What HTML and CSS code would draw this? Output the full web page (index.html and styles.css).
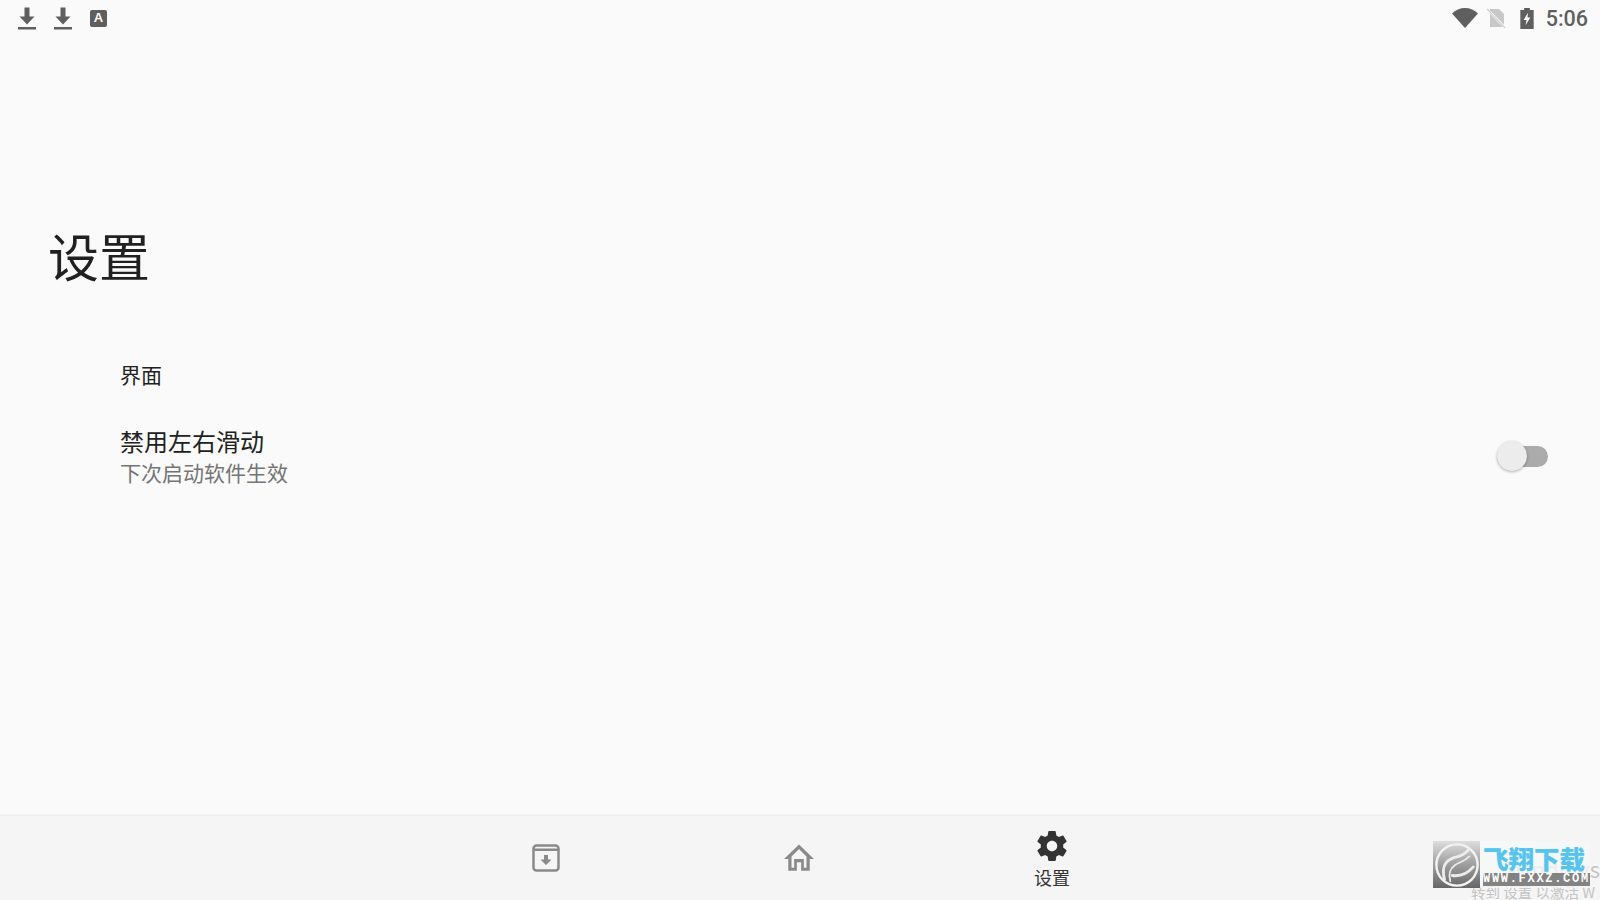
FILE: index.html
```html
<!DOCTYPE html>
<html lang="zh-CN">
<head>
<meta charset="utf-8">
<title>设置</title>
<link rel="stylesheet" href="styles.css">
</head>
<body>
<div class="app">
  <header class="status">
    <div class="status-left">
      <svg class="ic-dl" viewBox="0 0 18 24"><path d="M6.5 1.5h5v9h5L9 18.5 1.500 10.500h5z"/><rect y="21" width="18" height="2.500"/></svg>
      <svg class="ic-dl" viewBox="0 0 18 24"><path d="M6.5 1.5h5v9h5L9 18.5 1.500 10.500h5z"/><rect y="21" width="18" height="2.500"/></svg>
      <span class="ic-a">A</span>
    </div>
    <div class="status-right">
      <svg class="ic-wifi" viewBox="0 0 26 20"><path d="M0 5.500C3.500 2 8 0 13 0s9.500 2 13 5.500L13 20z"/></svg>
      <svg class="ic-sim" viewBox="0 0 20 20"><path d="M3 1h9l5 5v13H3z" fill="#c8c8c8"/><path d="M-1 0l20 20.500" stroke="#fafafa" stroke-width="2.500" fill="none"/><path d="M0 1l18 19" stroke="#cfcfcf" stroke-width="1.200" fill="none"/></svg>
      <svg class="ic-batt" viewBox="0 0 14 22"><path d="M4 0h6v2h4v20H0V2h4z" fill="#5f5f5f"/><path d="M8 5L3.500 12.500H6.500L5.500 18 10.500 10H7.500z" fill="#fafafa"/></svg>
      <span class="clock">5:06</span>
    </div>
  </header>

  <main class="page">
    <h1 class="title">设置</h1>
    <section class="group">
      <h2 class="group-title">界面</h2>
      <div class="row">
        <div class="row-text">
          <div class="row-title">禁用左右滑动</div>
          <div class="row-sub">下次启动软件生效</div>
        </div>
        <div class="switch"><span class="thumb"></span></div>
      </div>
    </section>
  </main>

  <nav class="nav">
    <div class="nav-item">
      <svg class="nav-ic" viewBox="0 0 28 28"><rect x="1.500" y="1.500" width="25" height="25" rx="3" fill="none" stroke="#8a8a8a" stroke-width="2.500"/><rect x="2" y="4.500" width="24" height="2.500" fill="#8a8a8a"/><path d="M12 11h4v4.500h3.500L14 21 8.500 15.500H12z" fill="#8a8a8a"/></svg>
    </div>
    <div class="nav-item">
      <svg class="nav-ic home" viewBox="0 0 28 28"><path d="M14 1.500L0 15h4v11h8v-8h4v8h8V15h4zM14 5.500l7 7V23h-2.500v-8h-9v8H7V12.500z" fill="#8a8a8a" fill-rule="evenodd"/></svg>
    </div>
    <div class="nav-item active">
      <svg class="gear" viewBox="0 0 24 24"><path fill-rule="evenodd" d="M19.430 12.980c.04-.32.070-.64.070-.98s-.03-.66-.07-.98l2.110-1.650c.19-.15.240-.42.120-.64l-2-3.460c-.12-.22-.39-.3-.61-.22l-2.490 1c-.52-.4-1.080-.73-1.690-.98l-.38-2.650C14.460 2.180 14.250 2 14 2h-4c-.25 0-.46.18-.49.42l-.38 2.650c-.61.25-1.170.59-1.690.98l-2.490-1c-.23-.09-.49 0-.61.220l-2 3.460c-.13.22-.07.49.12.640l2.110 1.650c-.04.32-.07.65-.07.98s.03.66.07.98l-2.110 1.650c-.19.15-.24.42-.12.64l2 3.460c.12.22.39.3.61.22l2.490-1c.52.4 1.080.73 1.690.98l.38 2.650c.03.24.24.42.49.42h4c.25 0 .46-.18.49-.42l.38-2.650c.61-.25 1.170-.59 1.690-.98l2.490 1c.23.09.49 0 .61-.22l2-3.460c.12-.22.07-.49-.12-.64l-2.110-1.650zM12 15.500c-1.930 0-3.500-1.570-3.500-3.500s1.570-3.500 3.500-3.500 3.500 1.570 3.500 3.500-1.570 3.500-3.500 3.500z"/></svg>
      <span class="nav-label">设置</span>
    </div>
  </nav>

  <div class="activate"><span class="act-1">Windows</span><span class="act-2">转到 设置 以激活 W</span></div>
  <div class="mark">
    <svg class="mark-logo" viewBox="0 0 48 48"><circle cx="24" cy="24" r="21.500" fill="none" stroke="#f2f2f2" stroke-width="2.500"/><g fill="none" stroke="#ececec" stroke-linecap="round"><path d="M11 39C8 28 11 20 19 17c6-2 12-2 17-9" stroke-width="3"/><path d="M17 41c-2-7-1-13 5-17 5-3 10-4 15-9" stroke-width="1.800"/><path d="M19 35c7 1 15-1 22-9" stroke-width="3"/></g></svg>
    <div class="mark-text">
      <span class="mark-cn">飞翔下载</span>
      <span class="mark-url">WWW.FXXZ.COM</span>
    </div>
  </div>
</div>
</body>
</html>
```
FILE: styles.css
```css
* { box-sizing: border-box; }
html, body { margin: 0; padding: 0; }
body {
  width: 1600px;
  height: 900px;
  overflow: hidden;
  background: #fafafa;
  font-family: "Noto Sans CJK SC", "Noto Sans", Roboto, sans-serif;
  color: #212121;
}
.app {
  position: relative;
  display: flex;
  flex-direction: column;
  width: 1600px;
  height: 900px;
}
.status {
  flex: none;
  height: 36px;
  display: flex;
  align-items: center;
  justify-content: space-between;
  padding: 0 12px 0 18px;
}
.status-left { display: flex; align-items: center; gap: 18px; }
.status-right { display: flex; align-items: center; }
.ic-dl { width: 18px; height: 24px; fill: #5f5f5f; display: block; }
.ic-a {
  width: 17px;
  height: 17px;
  background: #5f5f5f;
  color: #fafafa;
  border-radius: 2px;
  font: bold 13px/16px "Liberation Sans", sans-serif;
  text-align: center;
}
.ic-wifi { width: 26px; height: 20px; fill: #5f5f5f; margin-right: 9px; }
.ic-sim { width: 20px; height: 20px; margin-right: 13px; }
.ic-batt { width: 14px; height: 21px; margin-right: 12px; }
.clock {
  padding-top: 2px;
  font: 500 21.500px/24px Roboto, sans-serif;
  color: #5f5f5f;
}
.page { flex: 1; min-height: 0; padding: 187px 48px 0 48px; }
.title {
  margin: 0;
  font-size: 51px;
  font-weight: 400;
  line-height: 64px;
  color: #212121;
}
.group { padding-left: 72px; margin-top: 72px; }
.group-title {
  margin: 0;
  font-size: 21px;
  font-weight: 400;
  line-height: 30px;
}
.row {
  display: flex;
  align-items: center;
  justify-content: space-between;
  margin-top: 36px;
}
.row-title { font-size: 24px; line-height: 32px; }
.row-sub { font-size: 21px; line-height: 30px; color: #757575; }
.switch {
  position: relative;
  width: 51px;
  height: 21px;
  margin-top: 1px;
  background: #ababab;
  border-radius: 11px;
  margin-left: auto;
  margin-right: 4px;
}
.thumb {
  position: absolute;
  left: 0;
  top: -5px;
  width: 30px;
  height: 30px;
  border-radius: 50%;
  background: #ececec;
  box-shadow: 0 1px 3px rgba(0, 0, 0, .3);
}
.nav {
  flex: none;
  height: 85px;
  display: flex;
  justify-content: center;
  padding-right: 2px;
  background: #f5f5f5;
  border-top: 1px solid #eeeeee;
  box-shadow: 0 -1px 2px rgba(0, 0, 0, .03);
}
.nav-item {
  width: 253px;
  display: flex;
  flex-direction: column;
  align-items: center;
  justify-content: center;
}
.nav-ic { width: 28px; height: 28px; display: block; }
.home { width: 30px; height: 30px; }
.active { justify-content: flex-start; padding-top: 12px; }
.gear { width: 36px; height: 36px; fill: #333; display: block; }
.nav-label { font-size: 18px; line-height: 26px; color: #333; }
.activate {
  position: absolute;
  left: 1471px;
  top: 852px;
  width: 129px;
  height: 48px;
  overflow: hidden;
  white-space: nowrap;
  color: #c4c4c4;
  font-size: 14.500px;
}
.act-1 { display: block; text-align: right; font-size: 22px; line-height: 32px; }
.act-2 { display: block; line-height: 16px; }
.mark {
  position: absolute;
  left: 1433px;
  top: 841px;
  width: 157px;
  height: 47px;
  display: flex;
  align-items: center;
  padding-left: 1px;
  background:
    linear-gradient(180deg, #dedede 0, #aaa 40%, #666 100%) 0 0 / 47px 100% no-repeat,
    rgba(246, 247, 248, .8);
}
.mark-logo { width: 46px; height: 46px; flex: none; }
.mark-text { display: flex; flex-direction: column; padding-left: 3px; width: 109px; }
.mark-cn {
  font-size: 25.500px;
  line-height: 29px;
  font-weight: 900;
  color: #58c4ee;
  white-space: nowrap;
  text-shadow: 0 0 1px #bfe9fa;
}
.mark-url {
  width: 107px;
  height: 13px;
  margin-top: 1px;
  background: rgba(110, 110, 110, .85);
  color: #fff;
  font: bold 12px/13px "Liberation Mono", monospace;
  letter-spacing: 1.700px;
  white-space: nowrap;
  overflow: hidden;
}
```
